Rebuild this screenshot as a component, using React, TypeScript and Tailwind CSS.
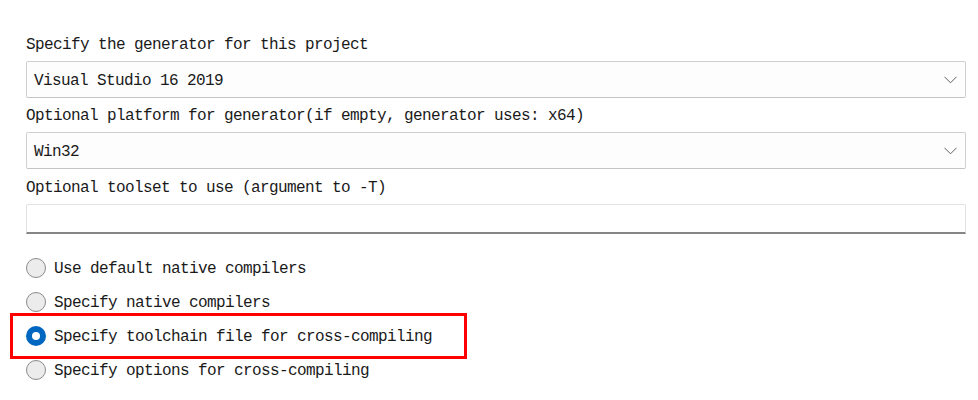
import React from "react";

const Chevron = () => (
  <svg width="13" height="8" viewBox="0 0 13 8" className="shrink-0">
    <polyline points="0.5,0.8 6.5,6.8 12.5,0.8" fill="none" stroke="#606060" strokeWidth="1" />
  </svg>
);

const Combo = ({ value }: { value: string }) => (
  <div className="h-[37px] flex items-center justify-between border border-[#d0d0d0] border-b-[#c4c4c4] bg-[#fdfdfd] rounded-[2px] pl-[7px] pr-[8px]">
    <span className="pt-[2px]">{value}</span>
    <Chevron />
  </div>
);

const Radio = ({ checked }: { checked?: boolean }) =>
  checked ? (
    <div className="w-[20px] h-[20px] rounded-full bg-[#0067c0] flex items-center justify-center shrink-0">
      <div className="w-[8px] h-[8px] rounded-full bg-white" />
    </div>
  ) : (
    <div className="w-[20px] h-[20px] rounded-full border border-[#8a8a8a] bg-[#ececec] shrink-0" />
  );

const RadioRow = ({ label, checked, boxed }: { label: string; checked?: boolean; boxed?: boolean }) => (
  <div className="relative h-[34px] flex items-center gap-[8px]">
    <Radio checked={checked} />
    <span className="pt-[2px]">{label}</span>
    {boxed && (
      <div className="absolute left-[-16px] top-[-6px] w-[457px] h-[46px] border-[3px] border-[#ff0000]" />
    )}
  </div>
);

export default function App() {
  return (
    <div
      className="w-[978px] h-[400px] bg-white text-[#1a1a1a] text-[16px] tracking-[-0.6px] leading-[20px] pl-[26px] pr-[12px] pt-[35px] flex flex-col"
      style={{ fontFamily: '"Liberation Mono", "DejaVu Sans Mono", monospace' }}
    >
      <div className="h-[20px]">Specify the generator for this project</div>
      <div className="mt-[6px]">
        <Combo value="Visual Studio 16 2019" />
      </div>
      <div className="h-[20px] mt-[8px]">Optional platform for generator(if empty, generator uses: x64)</div>
      <div className="mt-[6px]">
        <Combo value="Win32" />
      </div>
      <div className="h-[20px] mt-[9px]">Optional toolset to use (argument to -T)</div>
      <div className="mt-[6px] h-[30px] border border-[#e3e3e3] border-b-2 border-b-[#868686] bg-white rounded-t-[2px]" />
      <div className="mt-[17px] flex flex-col">
        <RadioRow label="Use default native compilers" />
        <RadioRow label="Specify native compilers" />
        <RadioRow label="Specify toolchain file for cross-compiling" checked boxed />
        <RadioRow label="Specify options for cross-compiling" />
      </div>
    </div>
  );
}
